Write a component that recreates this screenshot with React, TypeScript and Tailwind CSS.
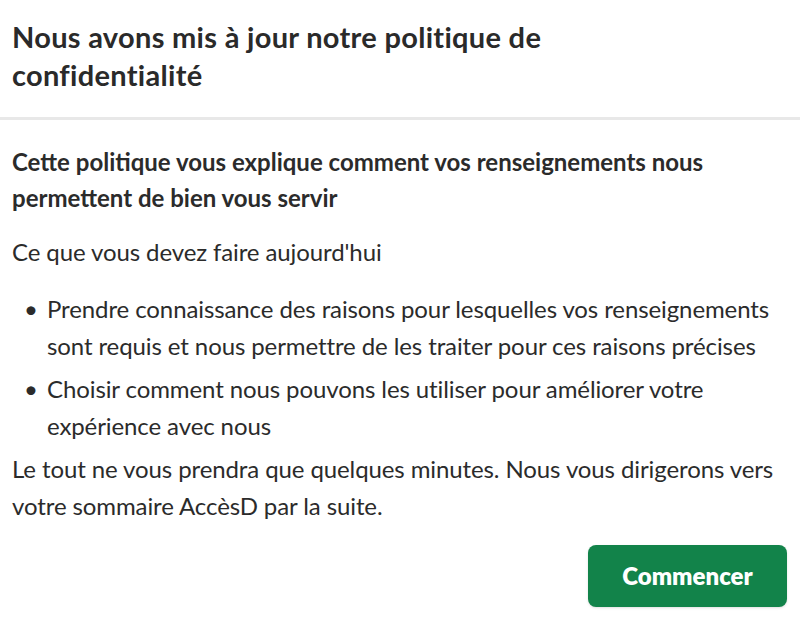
export default function App() {
  return (
    <div className="w-[800px] h-[625px] bg-white text-[#2b2b2b] overflow-hidden" style={{ fontFamily: 'Lato, "Noto Sans", sans-serif' }}>
      <div className="px-3 pt-[18px] pb-[23px]">
        <h1 className="text-[29px] leading-[38px] font-bold tracking-[0.3px] text-[#2a2a2a]">
          Nous avons mis à jour notre politique de
          <br />
          confidentialité
        </h1>
      </div>
      <div className="h-[3px] bg-[#e8e8e8]" />
      <div className="px-3 pt-[24px]">
        <h2 className="text-[24px] leading-[36px] font-bold">
          Cette politique vous explique comment vos renseignements nous
          <br />
          permettent de bien vous servir
        </h2>
        <p className="mt-[17px] text-[24px] leading-[38px] tracking-[-0.1px]">Ce que vous devez faire aujourd'hui</p>
        <ul className="mt-[19px] flex flex-col gap-[6px] text-[24px] leading-[37px] tracking-[-0.1px]">
          <li className="flex">
            <span className="w-[35px] shrink-0 pl-[12px]">•</span>
            <span>
              Prendre connaissance des raisons pour lesquelles vos renseignements
              <br />
              sont requis et nous permettre de les traiter pour ces raisons précises
            </span>
          </li>
          <li className="flex">
            <span className="w-[35px] shrink-0 pl-[12px]">•</span>
            <span>
              Choisir comment nous pouvons les utiliser pour améliorer votre
              <br />
              expérience avec nous
            </span>
          </li>
        </ul>
        <p className="mt-[6px] text-[24px] leading-[37px] tracking-[-0.1px]">
          Le tout ne vous prendra que quelques minutes. Nous vous dirigerons vers
          <br />
          votre sommaire AccèsD par la suite.
        </p>
        <div className="flex justify-end mt-[21px] pr-[1px]">
          <button className="w-[199px] h-[62px] rounded-[8px] bg-[#12834a] text-white text-[24px] font-extrabold shadow-sm">
            Commencer
          </button>
        </div>
      </div>
    </div>
  );
}
